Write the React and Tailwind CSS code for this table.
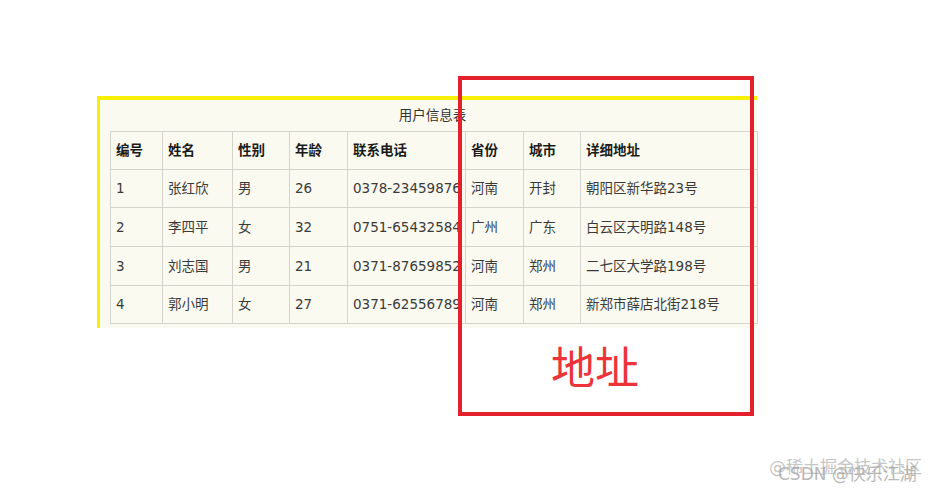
import React from "react";

const users = [
  { id: "1", name: "张红欣", sex: "男", age: "26", phone: "0378-23459876", province: "河南", city: "开封", address: "朝阳区新华路23号" },
  { id: "2", name: "李四平", sex: "女", age: "32", phone: "0751-65432584", province: "广州", city: "广东", address: "白云区天明路148号" },
  { id: "3", name: "刘志国", sex: "男", age: "21", phone: "0371-87659852", province: "河南", city: "郑州", address: "二七区大学路198号" },
  { id: "4", name: "郭小明", sex: "女", age: "27", phone: "0371-62556789", province: "河南", city: "郑州", address: "新郑市薛店北街218号" },
];

const headers = ["编号", "姓名", "性别", "年龄", "联系电话", "省份", "城市", "详细地址"];
const widths = ["w-[52px]", "w-[70px]", "w-[57px]", "w-[58px]", "w-[118px]", "w-[58px]", "w-[57px]", "w-[177px]"];

export default function App() {
  return (
    <div
      className="relative w-[944px] h-[498px] bg-white overflow-hidden"
      style={{ fontFamily: '"DejaVu Sans", "Noto Sans CJK SC", sans-serif' }}
    >
      {/* screenshot of the table */}
      <div className="pt-[96px] pl-[97px]">
        <div className="w-[660px] h-[232px] border-t-4 border-l-[3px] border-[#f7f000] bg-[#fbfaf1]">
          <div className="h-[31px] flex items-center justify-center pl-[8px] text-[13.5px] text-[#333]">用户信息表</div>
          <table className="ml-[10px] w-[647px] table-fixed border-collapse text-[13.5px]">
            <colgroup>
              {widths.map((w, i) => (
                <col key={i} className={w} />
              ))}
            </colgroup>
            <thead>
              <tr className="h-[38px]">
                {headers.map((h) => (
                  <th key={h} className="border border-[#d4d4cc] pl-[5px] text-left font-bold text-[#1a1a1a]">
                    {h}
                  </th>
                ))}
              </tr>
            </thead>
            <tbody>
              {users.map((u, i) => (
                <tr key={u.id} className={i === 0 || i === 3 ? "h-[38px]" : "h-[39px]"}>
                  {[u.id, u.name, u.sex, u.age, u.phone, u.province, u.city, u.address].map((v, j) => (
                    <td key={j} className="border border-[#d4d4cc] pl-[5px] text-[#3a3a3a] whitespace-nowrap overflow-hidden">
                      {v}
                    </td>
                  ))}
                </tr>
              ))}
            </tbody>
          </table>
        </div>
      </div>

      {/* red highlight box */}
      <div className="absolute left-[458px] top-[76px] w-[296px] h-[340px] border-4 border-[#e3202b]">
        <div className="absolute left-[89px] top-[267px] text-[44px] leading-none text-[#ee3338]">地址</div>
      </div>

      {/* watermarks */}
      <div className="absolute left-[769px] top-[459px] text-[17px] leading-none text-[#b8b8b8] opacity-80">@稀土掘金技术社区</div>
      <div className="absolute left-[778px] top-[466px] text-[17px] leading-none text-[#a8a8a8] opacity-80">CSDN @快乐江湖</div>
    </div>
  );
}
